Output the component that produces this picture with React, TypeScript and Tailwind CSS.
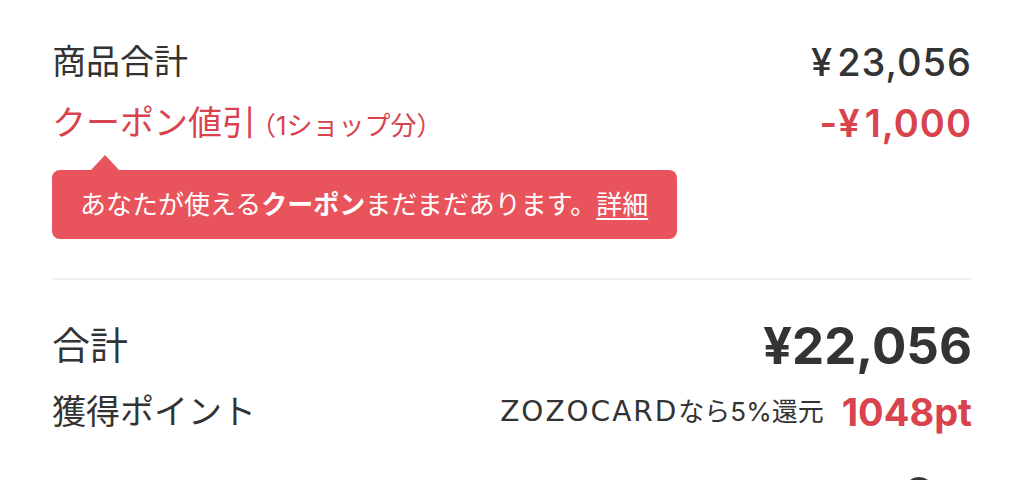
import React, { type ReactElement } from 'react'

const font = { fontFamily: 'Inter, "Noto Sans CJK JP", sans-serif' }
const wideLatin = { fontFamily: '"DejaVu Sans", "Noto Sans CJK JP", sans-serif' }

export default function App (): ReactElement {
	return (
		<main className="w-[1024px] h-[480px] overflow-hidden bg-white text-[#333333] px-[52px] pt-[37px]" style={font}>
			{/* 商品合計 */}
			<div className="flex items-center justify-between h-[50px]">
				<span className="text-[34px] leading-none">{'商品合計'}</span>
				<span className="text-[38px] leading-none font-medium tracking-[1px]">
					<span className="mr-1">{'¥'}</span>{'23,056'}
				</span>
			</div>

			{/* クーポン値引 */}
			<div className="flex items-center justify-between h-[50px] mt-[11px] text-[#d8434d]">
				<span className="flex items-baseline">
					<span className="text-[34px] leading-none">{'クーポン値引'}</span>
					<span className="text-[26px] leading-none ml-[-6px]">{'（1ショップ分）'}</span>
				</span>
				<span className="text-[38px] leading-none font-semibold tracking-[1px]">
					{'-'}<span className="mr-1">{'¥'}</span>{'1,000'}
				</span>
			</div>

			{/* tooltip */}
			<div className="mt-[7px]">
				<div className="ml-[39px] w-0 h-0 border-x-[14px] border-x-transparent border-b-[15px] border-b-[#e9535b]" />
				<div className="w-[625px] h-[69px] rounded-lg bg-[#e9535b] text-white flex items-center px-[28px] text-[26px] leading-none">
					<span>{'あなたが使える'}</span>
					<span className="font-bold">{'クーポン'}</span>
					<span>{'まだまだあります。'}</span>
					<span className="underline underline-offset-4">{'詳細'}</span>
				</div>
			</div>

			<div className="h-[2px] bg-[#f0f0f0] mt-[39px]" />

			{/* 合計 */}
			<div className="flex items-center justify-between h-[60px] mt-[35px]">
				<span className="text-[38px] leading-none">{'合計'}</span>
				<span className="text-[51px] leading-none font-bold">{'¥22,056'}</span>
			</div>

			{/* 獲得ポイント */}
			<div className="flex items-center justify-between h-[50px] mt-[12px]">
				<span className="text-[34px] leading-none">{'獲得ポイント'}</span>
				<span className="flex items-center">
					<span className="text-[28px] leading-none tracking-[2px]" style={wideLatin}>{'ZOZOCARD'}</span>
					<span className="text-[26px] leading-none">{'なら5%還元'}</span>
					<span className="text-[38px] leading-none font-bold text-[#d8434d] ml-[18px]">{'1048pt'}</span>
				</span>
			</div>

			<div className="flex justify-end mt-[40px] pr-[38px]">
				<div className="w-[30px] h-[30px] rounded-full bg-[#333333]" />
			</div>
		</main>
	)
}
